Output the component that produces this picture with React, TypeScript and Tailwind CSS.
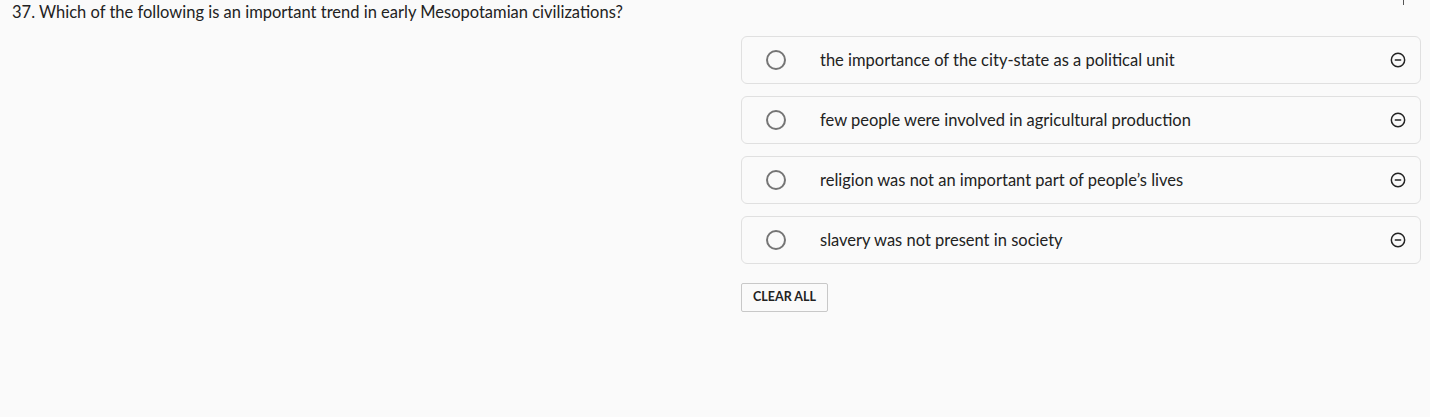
import { CircleMinus } from "lucide-react"

const options = [
  "the importance of the city-state as a political unit",
  "few people were involved in agricultural production",
  "religion was not an important part of people\u2019s lives",
  "slavery was not present in society",
]

export default function App() {
  return (
    <div
      className="min-h-[417px] w-full bg-[#fafafa] text-[#222222]"
      style={{ fontFamily: "Lato, 'Noto Sans', sans-serif" }}
    >
      {/* Question header */}
      <div className="relative flex h-[24px] items-center pl-[12px]">
        <span className="text-[16.5px] leading-[24px]">
          37. Which of the following is an important trend in early Mesopotamian civilizations?
        </span>
        <span className="absolute right-[26px] top-0 h-[5px] w-px bg-[#555]" />
      </div>

      <div className="mt-[12px] flex">
        <div className="w-[741px] shrink-0" />
        <div className="flex flex-1 flex-col pr-[9px]">
          <div className="flex flex-col gap-[12px]">
            {options.map((text) => (
              <div
                key={text}
                className="flex h-[48px] items-center rounded-[6px] border border-[#e0e0e0] bg-[#fafafa]"
              >
                <div className="flex w-[66px] justify-center pl-[2px]">
                  <span className="h-[20px] w-[20px] rounded-full border-2 border-[#757575]" />
                </div>
                <span className="ml-[12px] flex-1 text-[16.5px] text-[#222]">{text}</span>
                <CircleMinus className="mr-[14px] h-[16px] w-[16px] text-[#222]" strokeWidth={2.2} />
              </div>
            ))}
          </div>
          <div className="mt-[19px]">
            <button className="h-[29px] rounded-[2px] border border-[#c8c8c8] bg-[#fafafa] px-[11px] text-[12.5px] font-bold uppercase text-[#222]">
              Clear all
            </button>
          </div>
        </div>
      </div>
    </div>
  )
}
